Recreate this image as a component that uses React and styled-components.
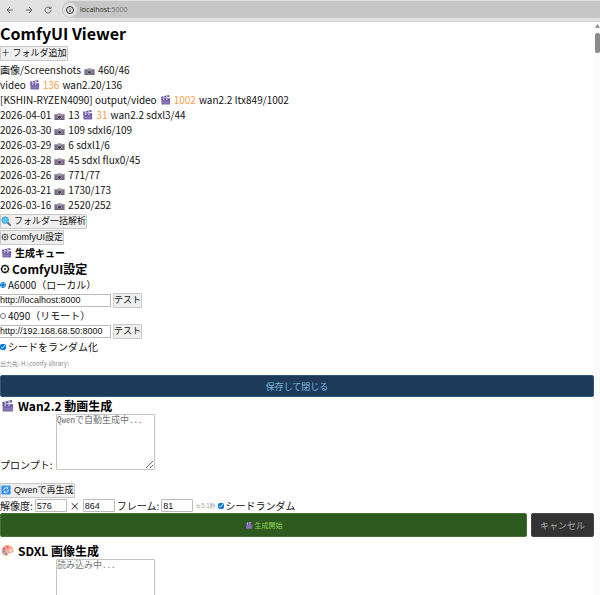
import React from "react"
import styled, { createGlobalStyle } from "styled-components"

const folders = [
  { name: "画像/Screenshots", images: "460/46" },
  { name: "video", videos: "136", rest: "wan2.20/136" },
  {
    name: "[KSHIN-RYZEN4090] output/video",
    videos: "1002",
    rest: "wan2.2 ltx849/1002",
  },
  { name: "2026-04-01", images: "13", videos: "31", rest: "wan2.2 sdxl3/44" },
  { name: "2026-03-30", images: "109 sdxl6/109" },
  { name: "2026-03-29", images: "6 sdxl1/6" },
  { name: "2026-03-28", images: "45 sdxl flux0/45" },
  { name: "2026-03-26", images: "771/77" },
  { name: "2026-03-21", images: "1730/173" },
  { name: "2026-03-16", images: "2520/252" },
]

const Clapper = ({ size = 11 }) => (
  <Glyph $size={size} viewBox="0 0 24 24" aria-hidden="true">
    <path d="M3 10h19v12a1 1 0 0 1-1 1H4a1 1 0 0 1-1-1z" fill="#7d68ac" />
    <path d="M2 6 20 2l1 4L3 10z" fill="#6a56a2" />
    <path d="m6 5 3-1 1 4-3 1zM13 4l3-1 1 4-3 1z" fill="#cfc4ea" />
    <path d="M3 10h19v3H3z" fill="#5e4a9e" />
    <path d="M7 10h3l-1 3H6zM14 10h3l-1 3h-3z" fill="#cfc4ea" />
    <path d="M5 17h15v3H5z" fill="#917bbf" />
  </Glyph>
)

const Camera = () => (
  <Glyph $size={11} viewBox="0 0 24 24" aria-hidden="true">
    <path d="M1 12h22v12H1z" fill="#6a5f73" />
    <path d="M1 11h22v3H1zM8 9h8v3H8z" fill="#a196ac" />
    <circle cx="12" cy="18" r="5" fill="#a99eb4" />
    <circle cx="12" cy="18" r="3" fill="#3c3345" />
    <path d="M3 16h3v6H3zM18 16h3v6h-3z" fill="#85798f" />
  </Glyph>
)

const Magnifier = () => (
  <Glyph $size={10} viewBox="0 0 24 24" aria-hidden="true">
    <path d="m16 16 6 6" stroke="#7a4d91" strokeWidth="4" strokeLinecap="round" />
    <circle cx="10" cy="10" r="8" fill="#55c7ef" stroke="#4f97b8" strokeWidth="2" />
  </Glyph>
)

const Gear = ({ size = 8, weight = 2 }) => (
  <Glyph $size={size} viewBox="0 0 24 24" fill="none" stroke="currentColor" aria-hidden="true">
    <circle cx="12" cy="12" r="8" strokeWidth={weight} />
    <circle cx="12" cy="12" r="2" fill="currentColor" />
    <path
      d="M12 1v3M12 20v3M1 12h3M20 12h3M4 4l2 2M18 18l2 2M4 20l2-2M18 6l2-2"
      strokeWidth="2"
    />
  </Glyph>
)

const Cycle = () => (
  <Glyph $size={10} viewBox="0 0 24 24" fill="none" aria-hidden="true">
    <rect x="1" y="1" width="22" height="22" rx="3" fill="#2b91ef" />
    <path
      d="M7 13V10a3 3 0 0 1 3-3h6M17 11v3a3 3 0 0 1-3 3H8M14 4l3 3-3 3M10 14l-3 3 3 3"
      stroke="#fff"
      strokeWidth="2"
    />
  </Glyph>
)

const Palette = () => (
  <Glyph $size={13} viewBox="0 0 24 24" aria-hidden="true">
    <path
      d="M12 2C5 2 1 7 1 13s4 9 9 9c4 0 3-4 5-5s8 1 8-5c0-6-5-10-11-10z"
      fill="#ffab94"
    />
    <circle cx="18" cy="12" r="2" fill="#fff" />
    <circle cx="6" cy="9" r="2" fill="#b14be0" />
    <circle cx="12" cy="6" r="2" fill="#ef4b67" />
    <circle cx="5" cy="14" r="2" fill="#2fa7b5" />
    <circle cx="9" cy="18" r="2" fill="#3b8de0" />
  </Glyph>
)

const App = () => {
  return (
    <Page>
      <GlobalStyle />
      <BrowserBar>
        <NavButton aria-label="Back">
          <svg viewBox="0 0 8 8">
            <path d="M7 4H1M4 1 1 4l3 3" />
          </svg>
        </NavButton>
        <NavButton aria-label="Forward">
          <svg viewBox="0 0 8 8">
            <path d="M1 4h6M4 1l3 3-3 3" />
          </svg>
        </NavButton>
        <NavButton aria-label="Reload">
          <svg viewBox="0 0 8 8">
            <path d="M7 4a3 3 0 1 1-1-2.200M7 .5V2.500H5" />
          </svg>
        </NavButton>
        <Address>
          <InfoBadge>
            <svg viewBox="0 0 10 10">
              <circle cx="5" cy="5" r="3.500" />
              <path d="M5 4.500V7M5 2.800v.8" />
            </svg>
          </InfoBadge>
          <span>
            localhost<Port>:5000</Port>
          </span>
        </Address>
      </BrowserBar>
      <Body>
        <Main>
          <Title>ComfyUI Viewer</Title>
          <ButtonRow>
            <Button>＋ フォルダ追加</Button>
          </ButtonRow>
          <FolderList>
            {folders.map(folder => (
              <Folder key={folder.name}>
                <span>{folder.name}</span>
                {folder.images && <Camera />}
                {folder.images && <span>{folder.images}</span>}
                {folder.videos && (
                  <Videos>
                    <Clapper />
                    <Count>{folder.videos}</Count>
                  </Videos>
                )}
                {folder.rest && <span>{folder.rest}</span>}
              </Folder>
            ))}
          </FolderList>
          <ButtonRow>
            <Button>
              <Magnifier /> フォルダ一括解析
            </Button>
          </ButtonRow>
          <ButtonRow>
            <Button $tight>
              <Gear /> ComfyUI設定
            </Button>
          </ButtonRow>
          <Queue>
            <Clapper /> 生成キュー
          </Queue>

          <Heading>
            <Gear size={10} weight={3} /> ComfyUI設定
          </Heading>
          <Option>
            <Tick type="radio" name="server" defaultChecked />
            A6000（ローカル）
          </Option>
          <ServerRow>
            <UrlInput aria-label="A6000 URL" defaultValue="http://localhost:8000" />
            <Button>テスト</Button>
          </ServerRow>
          <Option>
            <Tick type="radio" name="server" />
            4090（リモート）
          </Option>
          <ServerRow>
            <UrlInput aria-label="4090 URL" defaultValue="http://192.168.68.50:8000" />
            <Button>テスト</Button>
          </ServerRow>
          <Option>
            <Tick type="checkbox" defaultChecked />
            シードをランダム化
          </Option>
          <Output>出力先: H:\comfy-library\</Output>
          <SaveButton>保存して閉じる</SaveButton>

          <Heading $wide>
            <Clapper size={13} /> Wan2.2 動画生成
          </Heading>
          <Prompt>
            <PromptLabel htmlFor="wan-prompt">プロンプト:</PromptLabel>
            <TextArea id="wan-prompt" placeholder="Qwenで自動生成中..." />
          </Prompt>
          <ButtonRow>
            <Button>
              <Cycle /> Qwenで再生成
            </Button>
          </ButtonRow>
          <Settings>
            <label htmlFor="width">解像度:</label>
            <NumberInput id="width" defaultValue="576" />
            <Times>×</Times>
            <NumberInput aria-label="高さ" defaultValue="864" />
            <label htmlFor="frames">フレーム:</label>
            <NumberInput id="frames" defaultValue="81" />
            <Seconds>≈5.1秒</Seconds>
            <Option>
              <Tick type="checkbox" defaultChecked />
              シードランダム
            </Option>
          </Settings>
          <Actions>
            <StartButton>
              <Clapper size={8} /> 生成開始
            </StartButton>
            <CancelButton>キャンセル</CancelButton>
          </Actions>

          <Heading $wide>
            <Palette /> SDXL 画像生成
          </Heading>
          <Prompt>
            <PromptLabel />
            <TextArea aria-label="SDXL プロンプト" placeholder="読み込み中..." />
          </Prompt>
        </Main>
        <Scrollbar>
          <Arrow viewBox="0 0 6 4">
            <path d="M3 0 6 4H0z" />
          </Arrow>
          <Thumb />
        </Scrollbar>
      </Body>
    </Page>
  )
}

const GlobalStyle = createGlobalStyle`
  * {
    box-sizing: border-box;
  }
  body {
    margin: 0;
    background: #fff;
    color: #111;
    font-family: "Noto Sans CJK JP", sans-serif;
    font-size: 10px;
    line-height: 15px;
  }
`

const Page = styled.div`
  display: flex;
  flex-direction: column;
  height: 100vh;
  overflow: hidden;
`

const Glyph = styled.svg`
  flex: none;
  width: ${props => props.$size}px;
  height: ${props => props.$size}px;
`

const BrowserBar = styled.header`
  display: flex;
  flex: none;
  align-items: flex-start;
  gap: 3px;
  height: 22px;
  padding: 1px 0 0 2px;
  background: #e1e1e1;
  border-bottom: 1px solid #d4d4d4;
`

const NavButton = styled.button`
  display: flex;
  align-items: center;
  justify-content: center;
  width: 16px;
  height: 17px;
  padding: 0;
  border: 0;
  background: none;
  svg {
    width: 8px;
    height: 8px;
    fill: none;
    stroke: #666;
  }
`

const Address = styled.div`
  display: flex;
  flex: 1;
  align-items: center;
  gap: 3px;
  height: 17px;
  margin-left: 3px;
  padding-left: 1px;
  border-radius: 9px 0 0 9px;
  background: #c6c6c6;
  color: #333;
  font-family: "Noto Sans", sans-serif;
  font-size: 7px;
`

const InfoBadge = styled.span`
  display: flex;
  align-items: center;
  justify-content: center;
  width: 14px;
  height: 14px;
  border-radius: 50%;
  background: #e1e1e1;
  svg {
    width: 10px;
    height: 10px;
    fill: none;
    stroke: #333;
  }
`

const Port = styled.span`
  color: #777;
`

const Body = styled.div`
  display: flex;
  flex: 1;
  min-height: 0;
`

const Main = styled.main`
  flex: 1;
  min-width: 0;
  overflow: hidden;
`

const Title = styled.h1`
  margin: 0;
  color: #000;
  font-size: 16px;
  line-height: 23px;
`

const ButtonRow = styled.div`
  display: flex;
  align-items: center;
  height: 16px;
`

const Button = styled.button`
  display: flex;
  align-items: center;
  gap: ${props => (props.$tight ? "1px" : "3px")};
  height: 15px;
  padding: 0;
  border: 1px solid #c8c8c8;
  border-radius: 1px;
  background: #efefef;
  color: #111;
  font-family: "Liberation Sans", "Noto Sans CJK JP", sans-serif;
  font-size: 9px;
  line-height: 13px;
  white-space: nowrap;
`

const FolderList = styled.ul`
  margin: 0;
  padding: 1px 0;
  list-style: none;
`

const Folder = styled.li`
  display: flex;
  align-items: center;
  gap: 3px;
  white-space: nowrap;
`

const Videos = styled.span`
  display: flex;
  align-items: center;
  gap: 3px;
`

const Count = styled.span`
  color: #f5a04c;
`

const Queue = styled.div`
  display: flex;
  align-items: center;
  gap: 3px;
  padding-left: 1px;
  color: #000;
  font-weight: bold;
`

const Heading = styled.h3`
  display: flex;
  align-items: center;
  gap: ${props => (props.$wide ? "4px" : "2px")};
  margin: 0;
  padding-left: ${props => (props.$wide ? "1px" : "0")};
  color: #000;
  font-size: 12px;
  line-height: 17px;
`

const Option = styled.label`
  display: flex;
  align-items: center;
  gap: 2px;
`

const Tick = styled.input`
  width: 6px;
  height: 6px;
  margin: 0;
  accent-color: #0078d7;
`

const ServerRow = styled.div`
  display: flex;
  align-items: center;
  gap: 2px;
  height: 16px;
`

const Field = styled.input`
  height: 13px;
  padding: 0 1px;
  border: 1px solid #bbb;
  border-radius: 1px;
  background: #fff;
  color: #111;
  font-family: "Liberation Sans", sans-serif;
  font-size: 9px;
`

const UrlInput = styled(Field)`
  width: 111px;
  border-left: 0;
  padding-left: 0;
`

const NumberInput = styled(Field)`
  width: 32px;
`

const Output = styled.p`
  margin: 2px 0 4px;
  color: #888;
  font-size: 6px;
`

const SaveButton = styled.button`
  display: block;
  width: 100%;
  height: 22px;
  border: 1px solid #315878;
  border-radius: 2px;
  background: #1e3a5a;
  color: #7ab8d8;
  font-family: inherit;
  font-size: 9px;
`

const Prompt = styled.div`
  display: flex;
  align-items: flex-end;
  gap: 1px;
  margin-bottom: 12px;
`

const PromptLabel = styled.label`
  width: 55px;
  margin-bottom: -2px;
`

const TextArea = styled.textarea`
  width: 99px;
  height: 56px;
  padding: 0;
  border: 1px solid #c4c4c4;
  border-radius: 1px;
  background: #fff;
  font-family: "Noto Sans Mono CJK JP", "Noto Sans CJK JP", monospace;
  font-size: 9px;
  line-height: 10px;
  &::placeholder {
    color: #757575;
  }
`

const Settings = styled.div`
  display: flex;
  align-items: center;
  gap: 2px;
  white-space: nowrap;
`

const Times = styled.span`
  padding: 0 1px;
`

const Seconds = styled.span`
  color: #999;
  font-size: 6px;
`

const Actions = styled.div`
  display: flex;
  gap: 4px;
  margin-bottom: 5px;
`

const StartButton = styled.button`
  display: flex;
  flex: 1;
  align-items: center;
  justify-content: center;
  gap: 2px;
  height: 24px;
  border: 1px solid #47723a;
  border-radius: 2px;
  background: #2d5a1f;
  color: #8fce58;
  font-family: inherit;
  font-size: 7px;
`

const CancelButton = styled.button`
  width: 63px;
  height: 24px;
  padding: 0;
  border: 1px solid #444;
  border-radius: 2px;
  background: #333;
  color: #aaa;
  font-family: inherit;
  font-size: 9px;
`

const Scrollbar = styled.div`
  display: flex;
  flex: none;
  flex-direction: column;
  gap: 5px;
  width: 6px;
  padding: 2px 0 0 1px;
  background: #fbfbfb;
`

const Arrow = styled.svg`
  width: 5px;
  height: 4px;
  fill: #858585;
`

const Thumb = styled.div`
  height: 20px;
  border-radius: 2px;
  background: #8b8b8b;
`

export default App
